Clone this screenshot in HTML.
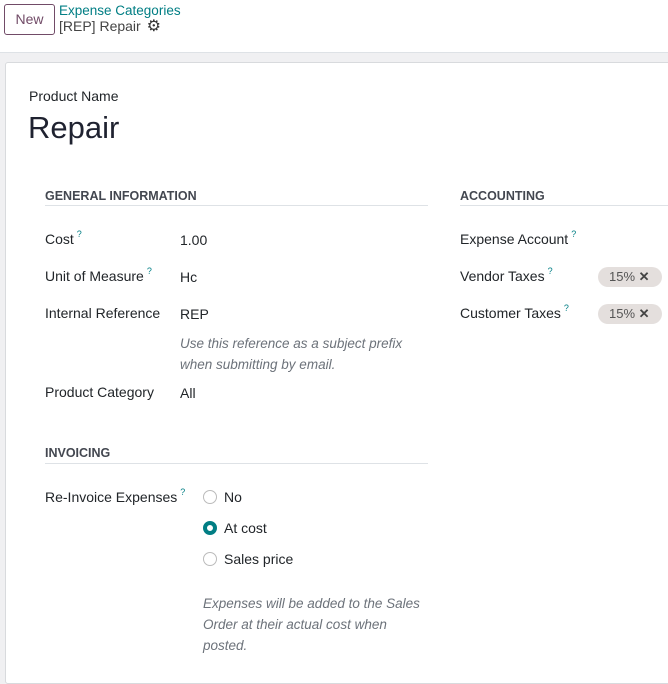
<html><head><style>
body{margin:0;width:668px;height:659px;overflow:hidden;background:#f0f0f2;font-family:"Liberation Sans",sans-serif;font-size:14px;color:#212529;position:relative}
.a{position:absolute;white-space:nowrap;line-height:18px}
.top{position:absolute;left:0;top:0;width:668px;height:52px;background:#fff;border-bottom:1px solid #dee2e6}
.sheet{position:absolute;left:5px;top:62px;width:680px;height:620px;background:#fff;border:1px solid #d8dadd;border-radius:3px}
.h{font-weight:bold;font-size:12.5px;color:#434750}
.line{position:absolute;height:1px;background:#dee2e6}
sup{color:#017e84;font-size:9px;margin-left:3px;line-height:0;vertical-align:0;position:relative;top:-7px}
.tag{position:absolute;background:#e4dfdd;border-radius:10px;width:64px;height:20px;font-size:13px;line-height:20px;color:#555}
.r{position:absolute;width:12px;height:12px;border:1px solid #bbb;border-radius:50%;background:#fff}
.i{font-style:italic;color:#6c727a;font-size:13.5px}
</style></head><body>
<div class="top"></div>
<div class="a" style="left:4px;top:4px;width:49px;height:29px;border:1px solid #714b67;border-radius:3px;color:#714b67;text-align:center;line-height:29px;background:#fff">New</div>
<div class="a" style="left:59px;top:2px;color:#017e84;font-size:13.5px">Expense Categories</div>
<div class="a" style="left:59px;top:17px;color:#444">[REP] Repair <span style="font-size:16px;color:#333;margin-left:2px">⚙</span></div>
<div class="sheet"></div>
<div class="a" style="left:29px;top:87px;font-size:14px">Product Name</div>
<div class="a" style="left:28px;top:110px;font-size:31px;line-height:36px;color:#1f2230">Repair</div>
<div class="a h" style="left:45px;top:187px">GENERAL INFORMATION</div>
<div class="line" style="left:45px;top:205px;width:383px"></div>
<div class="a h" style="left:460px;top:187px">ACCOUNTING</div>
<div class="line" style="left:460px;top:205px;width:208px"></div>
<div class="a" style="left:45px;top:230px">Cost<sup>?</sup></div><div class="a" style="left:180px;top:231px">1.00</div>
<div class="a" style="left:45px;top:267px">Unit of Measure<sup>?</sup></div><div class="a" style="left:180px;top:268px">Hc</div>
<div class="a" style="left:45px;top:304px">Internal Reference</div><div class="a" style="left:180px;top:305px">REP</div>
<div class="a i" style="left:180px;top:333px;line-height:21px">Use this reference as a subject prefix<br>when submitting by email.</div>
<div class="a" style="left:45px;top:383px">Product Category</div><div class="a" style="left:180px;top:384px">All</div>
<div class="a" style="left:460px;top:230px">Expense Account<sup>?</sup></div>
<div class="a" style="left:460px;top:267px">Vendor Taxes<sup>?</sup></div>
<div class="tag" style="left:598px;top:267px"><span style="margin-left:11px">15% <b style="color:#444">✕</b></span></div>
<div class="a" style="left:460px;top:304px">Customer Taxes<sup>?</sup></div>
<div class="tag" style="left:598px;top:304px"><span style="margin-left:11px">15% <b style="color:#444">✕</b></span></div>
<div class="a h" style="left:45px;top:444px">INVOICING</div>
<div class="line" style="left:45px;top:463px;width:383px"></div>
<div class="a" style="left:45px;top:488px">Re-Invoice Expenses<sup>?</sup></div>
<div class="r" style="left:203px;top:490px"></div><div class="a" style="left:224px;top:488px">No</div>
<div class="r" style="left:203px;top:521px;border:4px solid #017e84;width:6px;height:6px"></div><div class="a" style="left:224px;top:519px">At cost</div>
<div class="r" style="left:203px;top:552px"></div><div class="a" style="left:224px;top:550px">Sales price</div>
<div class="a i" style="left:203px;top:593px;line-height:21px">Expenses will be added to the Sales<br>Order at their actual cost when<br>posted.</div>
</body></html>
